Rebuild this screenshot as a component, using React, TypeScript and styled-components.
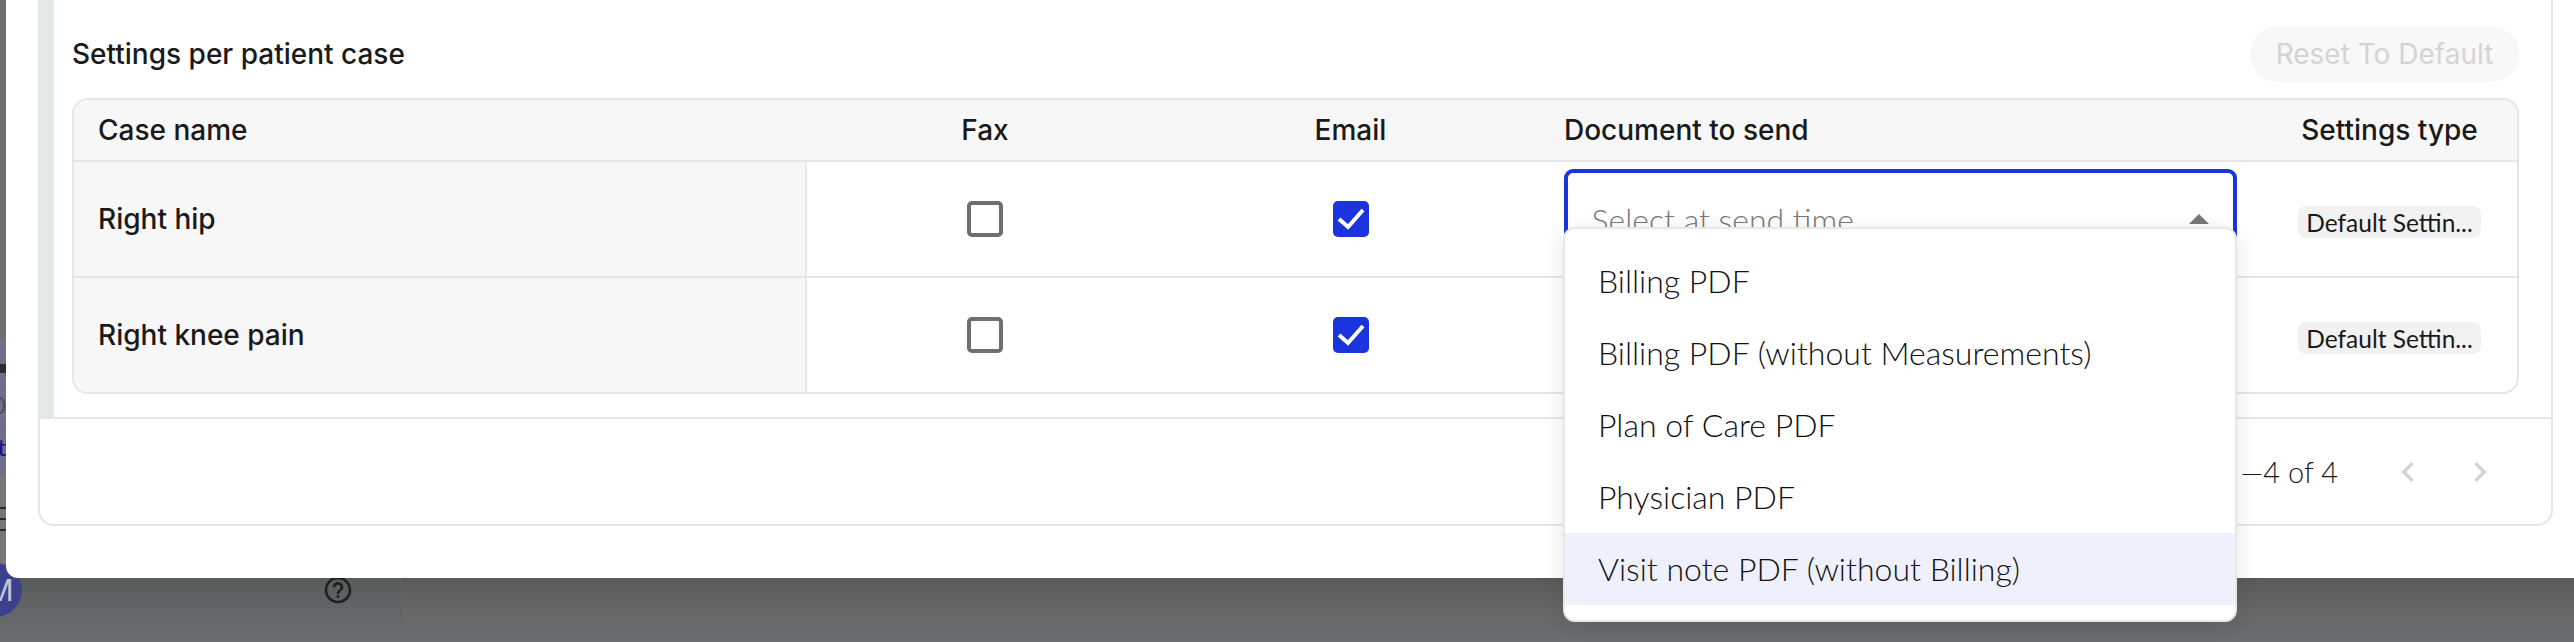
import React from 'react'
import styled, { createGlobalStyle } from 'styled-components'
import { MdChevronLeft, MdChevronRight, MdHelpOutline } from 'react-icons/md'

const CASES = ['Right hip', 'Right knee pain']
const DOCUMENTS = [
  'Billing PDF',
  'Billing PDF (without Measurements)',
  'Plan of Care PDF',
  'Physician PDF',
  'Visit note PDF (without Billing)',
]

const GlobalStyle = createGlobalStyle`
  html, body {
    margin: 0;
    padding: 0;
    background: #6c6d71;
    overflow: hidden;
  }
  * {
    box-sizing: border-box;
  }
`

const Page = styled.div`
  width: 2574px;
  height: 642px;
  display: flex;
  flex-direction: column;
  overflow: hidden;
  font-family: 'Inter', 'Liberation Sans', sans-serif;
  color: #1a1a1a;
`

const TopRow = styled.div`
  height: 578px;
  display: flex;
`

const LeftStrip = styled.div`
  width: 12px;
  margin-right: -6px;
  display: flex;
  flex-direction: column;
`

const StripBand = styled.div<{ $height: number; $color: string }>`
  height: ${props => props.$height}px;
  padding-right: 6px;
  display: flex;
  flex-direction: column;
  align-items: flex-end;
  overflow: hidden;
  background: ${props => props.$color};
`

const StripBlob = styled.div`
  width: 6px;
  height: 9px;
  margin-top: 23px;
  flex-shrink: 0;
  background: #2a2a2e;
`

const StripText = styled.span<{ $color: string; $top: number }>`
  margin-top: ${props => props.$top}px;
  font-family: 'Lato', sans-serif;
  font-size: 24px;
  line-height: 24px;
  color: ${props => props.$color};
`

const MenuLine = styled.div<{ $top: number }>`
  width: 6px;
  height: 2px;
  margin-top: ${props => props.$top}px;
  flex-shrink: 0;
  background: #2a2a2a;
`

const Modal = styled.div`
  flex: 1;
  position: relative;
  z-index: 2;
  padding-left: 32px;
  padding-right: 21px;
  background: #ffffff;
  border-bottom-left-radius: 12px;
`

const Card = styled.div`
  height: 526px;
  display: flex;
  flex-direction: column;
  border: 2px solid #e6e6e6;
  border-top: none;
  border-radius: 0 0 16px 16px;
`

const Section = styled.div`
  height: 417px;
  display: flex;
  flex-shrink: 0;
`

const Accent = styled.div`
  width: 14px;
  background: #e4e8e8;
`

const SectionBody = styled.div`
  flex: 1;
  padding: 26px 32px 0 18px;
`

const TitleRow = styled.div`
  height: 56px;
  display: flex;
  align-items: center;
  justify-content: space-between;
  margin-bottom: 16px;
`

const Title = styled.div`
  font-size: 28px;
  font-weight: 500;
`

const ResetButton = styled.div`
  width: 269px;
  height: 56px;
  display: flex;
  align-items: center;
  justify-content: center;
  border-radius: 28px;
  background: #f8f8f8;
  color: #d4d4d4;
  font-size: 28px;
`

const Table = styled.div`
  height: 296px;
  display: grid;
  grid-template-columns: 733px 356px 375px 724px 255px;
  grid-template-rows: 62px 116px 114px;
  border: 2px solid #e6e6e6;
  border-radius: 16px;
`

const HeadCell = styled.div<{ $center?: boolean; $pad?: number; $first?: boolean; $last?: boolean }>`
  display: flex;
  align-items: center;
  justify-content: ${props => (props.$center ? 'center' : 'flex-start')};
  padding-left: ${props => props.$pad ?? 0}px;
  background: #f7f7f7;
  border-bottom: 2px solid #e6e6e6;
  font-size: 28px;
  font-weight: 500;
  border-top-left-radius: ${props => (props.$first ? 14 : 0)}px;
  border-top-right-radius: ${props => (props.$last ? 14 : 0)}px;
`

const NameCell = styled.div<{ $last?: boolean }>`
  display: flex;
  align-items: center;
  padding-left: 24px;
  background: #f7f7f7;
  border-right: 2px solid #e6e6e6;
  border-bottom: ${props => (props.$last ? 'none' : '2px solid #e6e6e6')};
  border-bottom-left-radius: ${props => (props.$last ? 14 : 0)}px;
  font-size: 28px;
  font-weight: 500;
`

const Cell = styled.div<{ $last?: boolean }>`
  position: relative;
  display: flex;
  align-items: center;
  justify-content: center;
  border-bottom: ${props => (props.$last ? 'none' : '2px solid #e6e6e6')};
`

const CheckBox = styled.div<{ $checked?: boolean }>`
  width: 36px;
  height: 36px;
  border-radius: 5px;
  border: ${props => (props.$checked ? 'none' : '4px solid #6f6f6f')};
  background: ${props => (props.$checked ? '#1a35dd' : '#ffffff')};
`

const Select = styled.div`
  width: 673px;
  height: 100px;
  display: flex;
  align-items: center;
  justify-content: space-between;
  padding: 0 24px 0 24px;
  border: 4px solid #1a35dd;
  border-radius: 9px;
  color: #777777;
  font-family: 'Lato', sans-serif;
  font-size: 32px;
  font-weight: 300;
`

const Arrow = styled.div`
  width: 0;
  height: 0;
  border-left: 10px solid transparent;
  border-right: 10px solid transparent;
  border-bottom: 10px solid #777777;
`

const Dropdown = styled.div`
  position: absolute;
  top: 65px;
  left: 25px;
  z-index: 3;
  width: 674px;
  height: 395px;
  padding: 16px 0;
  background: #ffffff;
  border: 2px solid #e8e8e8;
  border-radius: 12px;
  box-shadow: 0 6px 24px rgba(0, 0, 0, 0.1);
`

const Option = styled.div<{ $active?: boolean }>`
  height: 72px;
  display: flex;
  align-items: center;
  padding: 0 0 2px 33px;
  background: ${props => (props.$active ? '#eef1fb' : 'transparent')};
  color: #111111;
  font-family: 'Lato', sans-serif;
  font-size: 32px;
  font-weight: 300;
`

const Chip = styled.div`
  width: 183px;
  height: 32px;
  margin-top: 6px;
  display: flex;
  align-items: center;
  justify-content: center;
  border-radius: 8px;
  background: #f2f2f2;
  font-family: 'Lato', sans-serif;
  font-size: 24.5px;
  white-space: nowrap;
`

const Footer = styled.div`
  flex: 1;
  display: flex;
  align-items: center;
  justify-content: flex-end;
  padding-right: 35px;
  border-top: 2px solid #e6e6e6;
`

const PageCount = styled.div`
  margin-right: 34px;
  font-family: 'Lato', sans-serif;
  font-size: 29px;
  font-weight: 300;
`

const PageStart = styled.span`
  padding-right: 8px;
`

const PageButton = styled.div`
  width: 72px;
  display: flex;
  justify-content: center;
  color: #d3d3d3;
`

const BottomBar = styled.div`
  height: 64px;
  display: flex;
  background: linear-gradient(#595a5a, #6d6e72);
`

const Avatar = styled.div`
  position: relative;
  z-index: 1;
  width: 54px;
  height: 54px;
  margin: -15px 0 0 -32px;
  padding-left: 10px;
  display: flex;
  align-items: center;
  justify-content: center;
  border-radius: 50%;
  background: #3c418f;
  color: #c4c5d8;
  font-size: 30px;
`

const Help = styled.div`
  width: 32px;
  height: 32px;
  margin: -4px 0 0 300px;
  color: #1f1f1f;
`

const BackCard = styled.div`
  flex: 1;
  height: 45px;
  margin-left: 46px;
  border-left: 1px solid #626262;
  border-bottom-left-radius: 14px;
  background: linear-gradient(#5a5a5a, #6b6b6b);
`

function Check() {
  return (
    <svg width="36" height="36" viewBox="0 0 36 36" fill="none">
      <polyline points="6,18 15,26 30,9" stroke="#ffffff" strokeWidth="4" />
    </svg>
  )
}

function App() {
  return (
    <Page>
      <GlobalStyle />
      <TopRow>
        <LeftStrip>
          <StripBand $height={341} $color="#6f6f72" />
          <StripBand $height={133} $color="#6f6f8c">
            <StripBlob />
            <StripText $color="#4c4c5a" $top={20}>0</StripText>
            <StripText $color="#10108c" $top={18}>t</StripText>
          </StripBand>
          <StripBand $height={104} $color="#767676">
            <MenuLine $top={33} />
            <MenuLine $top={9} />
            <MenuLine $top={9} />
          </StripBand>
        </LeftStrip>
        <Modal>
          <Card>
            <Section>
              <Accent />
              <SectionBody>
                <TitleRow>
                  <Title>Settings per patient case</Title>
                  <ResetButton>Reset To Default</ResetButton>
                </TitleRow>
                <Table>
                  <HeadCell $pad={24} $first>Case name</HeadCell>
                  <HeadCell $center>Fax</HeadCell>
                  <HeadCell $center>Email</HeadCell>
                  <HeadCell $pad={26}>Document to send</HeadCell>
                  <HeadCell $center $last>Settings type</HeadCell>
                  {CASES.map((name, i) => {
                    const last = i === CASES.length - 1
                    return (
                      <React.Fragment key={name}>
                        <NameCell $last={last}>{name}</NameCell>
                        <Cell $last={last}><CheckBox /></Cell>
                        <Cell $last={last}><CheckBox $checked><Check /></CheckBox></Cell>
                        <Cell $last={last}>
                          {i === 0 && (
                            <>
                              <Select>
                                <span>Select at send time</span>
                                <Arrow />
                              </Select>
                              <Dropdown>
                                {DOCUMENTS.map((doc, d) => (
                                  <Option key={doc} $active={d === DOCUMENTS.length - 1}>{doc}</Option>
                                ))}
                              </Dropdown>
                            </>
                          )}
                        </Cell>
                        <Cell $last={last}><Chip>Default Settin...</Chip></Cell>
                      </React.Fragment>
                    )
                  })}
                </Table>
              </SectionBody>
            </Section>
            <Footer>
              <PageCount><PageStart>1</PageStart>—4 of 4</PageCount>
              <PageButton><MdChevronLeft size={40} /></PageButton>
              <PageButton><MdChevronRight size={40} /></PageButton>
            </Footer>
          </Card>
        </Modal>
      </TopRow>
      <BottomBar>
        <Avatar>M</Avatar>
        <Help><MdHelpOutline size={32} /></Help>
        <BackCard />
      </BottomBar>
    </Page>
  )
}

export default App
